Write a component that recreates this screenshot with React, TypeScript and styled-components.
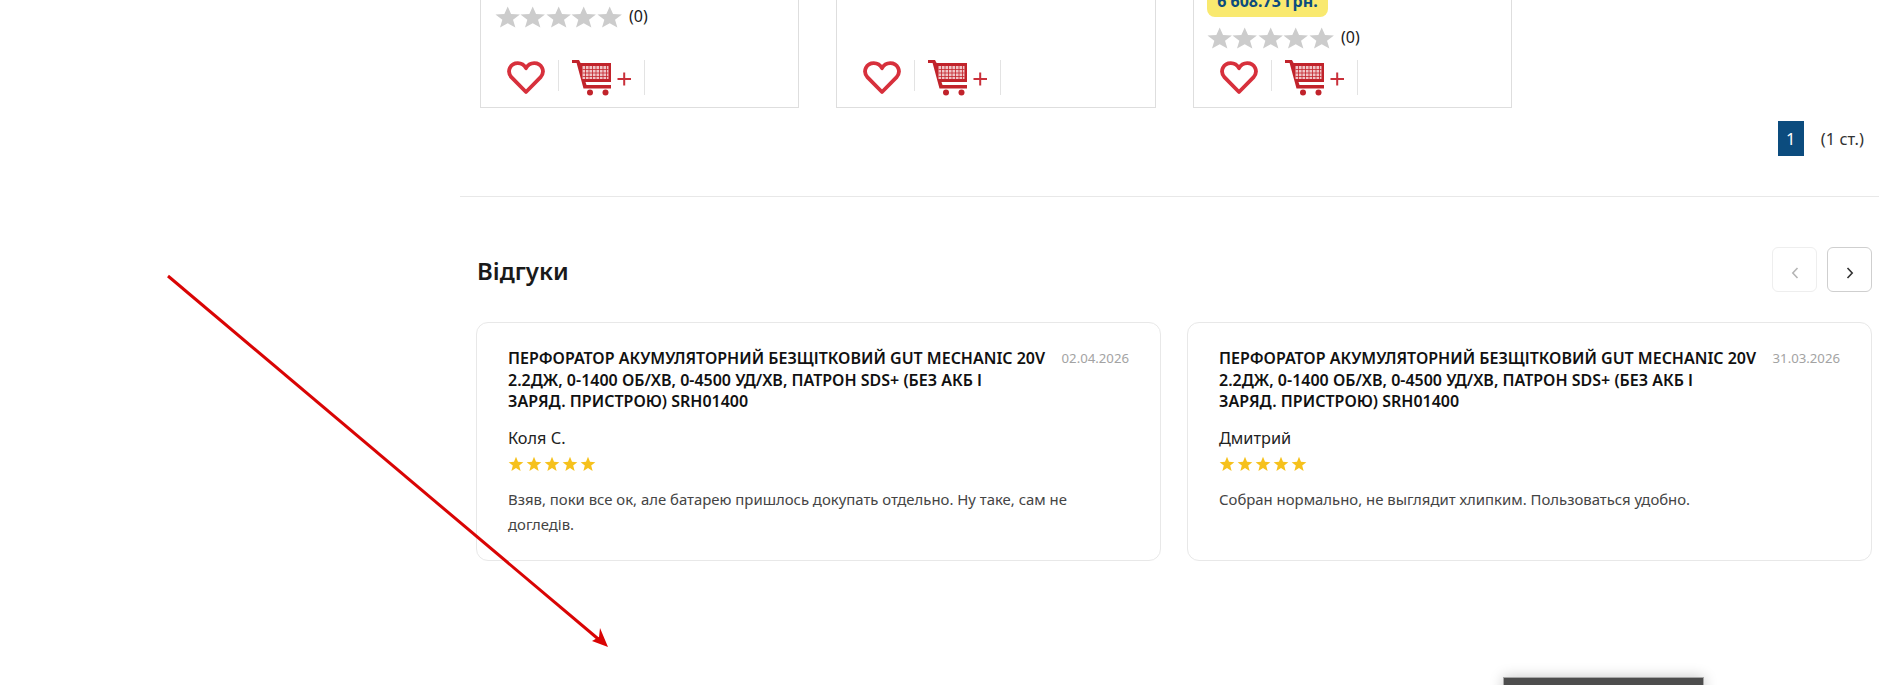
import React from "react"
import styled, { createGlobalStyle } from "styled-components"

const Global = createGlobalStyle`
  html, body {
    margin: 0;
    padding: 0;
    background: #fff;
    overflow: hidden;
    font-family: "Noto Sans", "Open Sans", sans-serif;
  }
  #root {
    height: 685px;
    overflow: hidden;
  }
`

const Page = styled.div`
  position: relative;
  width: 1879px;
  height: 685px;
  overflow: hidden;
`

const Content = styled.main`
  margin-left: 460px;
`

const ProductRow = styled.div`
  display: grid;
  grid-template-columns: 319px 320px 319px;
  column-gap: 37px;
  margin-top: -60px;
  padding-left: 20px;
`

const ProductCard = styled.div`
  height: 168px;
  box-sizing: border-box;
  border: 1px solid #dedede;
  border-top: 0;
  padding: 0 0 12px 26px;
  display: flex;
  flex-direction: column;
  justify-content: flex-end;
`

const PriceTag = styled.div`
  align-self: flex-start;
  margin: 0 0 10px -13px;
  width: 121px;
  height: 30px;
  box-sizing: border-box;
  padding-top: 1px;
  background: #f9e96f;
  border-radius: 8px;
  color: #0c4c7e;
  font-size: 16px;
  font-weight: 700;
  line-height: 26px;
  text-align: center;
`

const Rating = styled.div<{ $below: number; $left: number }>`
  display: flex;
  align-items: center;
  margin: 0 0 ${props => props.$below}px ${props => props.$left}px;
  height: 22px;
`

const RatingCount = styled.span`
  margin-left: 7px;
  margin-top: -3px;
  font-size: 16px;
  color: #1a1a1a;
`

const Actions = styled.div`
  display: flex;
  align-items: flex-start;
  height: 35px;
`

const Sep = styled.span<{ $h: number; $left: number }>`
  width: 1px;
  height: ${props => props.$h}px;
  margin-left: ${props => props.$left}px;
  background: #e3e3e3;
`

const HeartIcon = styled.svg`
  width: 38px;
  height: 34px;
  margin-top: 1px;
  flex: none;
`

const CartIcon = styled.svg`
  width: 60px;
  height: 36px;
  margin-left: 13px;
  flex: none;
`

const Pager = styled.div`
  display: flex;
  align-items: center;
  justify-content: flex-end;
  margin-top: 13px;
  height: 35px;
  padding-right: 15px;
`

const PageNum = styled.span`
  width: 26px;
  height: 35px;
  background: #0c4c7e;
  color: #fff;
  font-size: 16.5px;
  line-height: 35px;
  text-align: center;
`

const PageTotal = styled.span`
  margin-left: 17px;
  font-size: 16.5px;
  color: #333;
`

const Divider = styled.hr`
  margin: 40px 0 0;
  border: 0;
  border-top: 1px solid #e8e8e8;
`

const Reviews = styled.section`
  padding: 50px 7px 0 16px;
`

const ReviewsHead = styled.div`
  display: flex;
  align-items: center;
  justify-content: space-between;
  height: 45px;
`

const ReviewsTitle = styled.h2`
  margin: 2px 0 0 1px;
  font-size: 24px;
  font-weight: 600;
  color: #1a1a1a;
`

const ArrowGroup = styled.div`
  display: flex;
  gap: 10px;
`

const NavButton = styled.button<{ $off?: boolean }>`
  width: 45px;
  height: 45px;
  padding: 6px 0 0;
  background: #fff;
  border: 1px solid ${props => (props.$off ? "#eeeeee" : "#cfcfcf")};
  border-radius: 6px;
  color: ${props => (props.$off ? "#b5b5b5" : "#333")};
  display: flex;
  align-items: center;
  justify-content: center;
`

const ReviewGrid = styled.div`
  display: grid;
  grid-template-columns: 685px 685px;
  column-gap: 26px;
  margin-top: 30px;
`

const ReviewCard = styled.article`
  height: 239px;
  box-sizing: border-box;
  border: 1px solid #e8e8e8;
  border-radius: 12px;
  padding: 25px 31px 0;
`

const ReviewTop = styled.div`
  display: flex;
  justify-content: space-between;
  align-items: flex-start;
`

const ProductName = styled.h3`
  margin: 0;
  width: 545px;
  font-size: 16px;
  font-weight: 600;
  line-height: 21.5px;
  color: #111;
  white-space: pre-line;
`

const ReviewDate = styled.span`
  font-size: 13.2px;
  line-height: 21px;
  color: #a3a3a3;
`

const Author = styled.div`
  margin-top: 13px;
  font-size: 16.3px;
  line-height: 24px;
  color: #222;
`

const GoldStars = styled.div`
  display: flex;
  gap: 2px;
  margin-top: 6px;
  height: 16px;
`

const ReviewText = styled.p`
  margin: 15px 0 0;
  width: 590px;
  font-size: 14.9px;
  line-height: 25px;
  color: #444;
`

const Annotation = styled.svg`
  position: absolute;
  left: 0;
  top: 0;
  pointer-events: none;
`

const FloatingBar = styled.div`
  position: absolute;
  left: 1503px;
  top: 677px;
  width: 201px;
  height: 20px;
  box-sizing: border-box;
  background: #4d4d4d;
  border: 1px solid #a8a8a8;
  box-shadow: 0 0 14px rgba(0, 0, 0, 0.22);
`

const STAR = "M12 1 L15 8.6 L23 9.2 L16.8 14.4 L18.9 22.4 L12 18 L5.1 22.4 L7.2 14.4 L1 9.2 L9 8.6 Z"

const GreyStar = () => (
  <svg width="25.4" height="22" viewBox="0.6 0.6 22.8 22.2" preserveAspectRatio="none">
    <path d={STAR} fill="#cccccc" />
  </svg>
)

const GoldStar = () => (
  <svg width="16" height="16" viewBox="0 0 24 24">
    <path d={STAR} fill="#f6c11c" />
  </svg>
)

const RatingRow = ({ below, left }: { below: number; left: number }) => (
  <Rating $below={below} $left={left}>
    {[0, 1, 2, 3, 4].map(i => (
      <GreyStar key={i} />
    ))}
    <RatingCount>(0)</RatingCount>
  </Rating>
)

const ProductActions = () => (
  <Actions>
    <HeartIcon viewBox="0 0 38 34">
      <path
        d="M19 31 L4.6 16.4 C-1 10 3.6 2.2 10.8 2.2 C14.6 2.2 17.4 4.2 19 7.2 C20.6 4.2 23.4 2.2 27.2 2.2 C34.4 2.2 39 10 33.4 16.4 Z"
        fill="none"
        stroke="#d7303c"
        strokeWidth="3.8"
        strokeLinejoin="round"
      />
    </HeartIcon>
    <Sep $h={31} $left={13} />
    <CartIcon viewBox="0 0 60 36">
      <path d="M0 0 H7 L8.6 3 H39 V22 H13.5 L14.5 25 H39 V28.5 H11.5 L4.6 3 H0 Z" fill="#c1232b" />
      <rect x="10.5" y="6" width="26" height="13" fill="#f0c4c6" />
      <path
        d="M13.5 6 V19 M17 6 V19 M20.5 6 V19 M24 6 V19 M27.5 6 V19 M31 6 V19 M34.5 6 V19 M10.5 9.5 H36.5 M10.5 13 H36.5 M10.5 16.5 H36.5"
        stroke="#c1232b"
        strokeWidth="0.8"
      />
      <circle cx="18" cy="32.5" r="3" fill="#c1232b" />
      <circle cx="33.5" cy="32.5" r="3" fill="#c1232b" />
      <path d="M45.5 19 H59 M52.2 12.5 V25.5" stroke="#c9303a" strokeWidth="2" />
    </CartIcon>
    <Sep $h={35} $left={12} />
  </Actions>
)

const PRODUCT =
  "ПЕРФОРАТОР АКУМУЛЯТОРНИЙ БЕЗЩІТКОВИЙ GUT MECHANIC 20V 2.2ДЖ, 0-1400 ОБ/ХВ, 0-4500 УД/ХВ, ПАТРОН SDS+ (БЕЗ АКБ І\nЗАРЯД. ПРИСТРОЮ) SRH01400"

const REVIEWS = [
  {
    date: "02.04.2026",
    author: "Коля С.",
    text: "Взяв, поки все ок, але батарею пришлось докупать отдельно. Ну таке, сам не догледів.",
  },
  {
    date: "31.03.2026",
    author: "Дмитрий",
    text: "Собран нормально, не выглядит хлипким. Пользоваться удобно.",
  },
]

const App = () => {
  return (
    <Page>
      <Global />
      <Content>
        <ProductRow>
          <ProductCard>
            <RatingRow below={32} left={-12} />
            <ProductActions />
          </ProductCard>
          <ProductCard>
            <ProductActions />
          </ProductCard>
          <ProductCard>
            <PriceTag>6 608.73 грн.</PriceTag>
            <RatingRow below={11} left={-13} />
            <ProductActions />
          </ProductCard>
        </ProductRow>

        <Pager>
          <PageNum>1</PageNum>
          <PageTotal>(1 ст.)</PageTotal>
        </Pager>
        <Divider />

        <Reviews>
          <ReviewsHead>
            <ReviewsTitle>Відгуки</ReviewsTitle>
            <ArrowGroup>
              <NavButton $off>
                <svg width="8" height="12" viewBox="0 0 8 12">
                  <path d="M6.5 1 L1.8 6 L6.5 11" fill="none" stroke="currentColor" strokeWidth="1.6" />
                </svg>
              </NavButton>
              <NavButton>
                <svg width="8" height="12" viewBox="0 0 8 12">
                  <path d="M1.5 1 L6.2 6 L1.5 11" fill="none" stroke="currentColor" strokeWidth="1.6" />
                </svg>
              </NavButton>
            </ArrowGroup>
          </ReviewsHead>

          <ReviewGrid>
            {REVIEWS.map(review => (
              <ReviewCard key={review.date}>
                <ReviewTop>
                  <ProductName>{PRODUCT}</ProductName>
                  <ReviewDate>{review.date}</ReviewDate>
                </ReviewTop>
                <Author>{review.author}</Author>
                <GoldStars>
                  {[0, 1, 2, 3, 4].map(i => (
                    <GoldStar key={i} />
                  ))}
                </GoldStars>
                <ReviewText>{review.text}</ReviewText>
              </ReviewCard>
            ))}
          </ReviewGrid>
        </Reviews>
      </Content>

      <Annotation width="1879" height="685">
        <line x1="168" y1="276" x2="603" y2="643" stroke="#d90404" strokeWidth="3" />
        <path d="M608 647 L592 641 L599 637 L600 628 Z" fill="#d90404" />
      </Annotation>
      <FloatingBar />
    </Page>
  )
}

export default App
